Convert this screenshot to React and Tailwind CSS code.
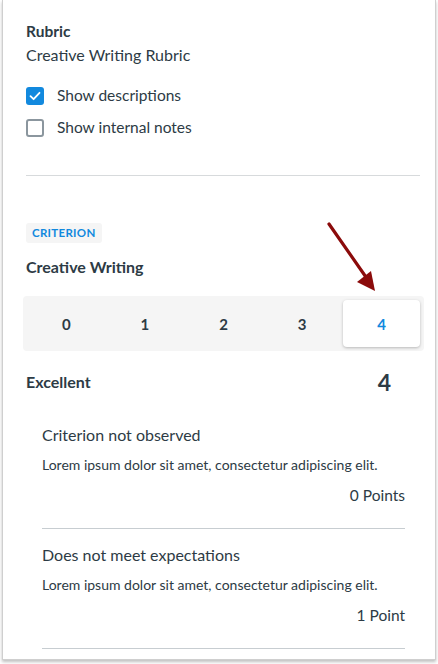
import React, { useState } from "react";

const ratings = [
  {
    title: "Criterion not observed",
    desc: "Lorem ipsum dolor sit amet, consectetur adipiscing elit.",
    points: "0 Points",
  },
  {
    title: "Does not meet expectations",
    desc: "Lorem ipsum dolor sit amet, consectetur adipiscing elit.",
    points: "1 Point",
  },
];

function Checkbox({ checked, label, onChange }) {
  return (
    <label className="flex items-center h-[20px] cursor-pointer">
      {checked ? (
        <span className="w-[18px] h-[18px] rounded-[3px] bg-[#1289de] flex items-center justify-center">
          <svg width="12" height="10" viewBox="0 0 12 10" fill="none">
            <path
              d="M1.5 5.2 L4.6 8.2 L10.5 1.8"
              stroke="white"
              strokeWidth="1.8"
              strokeLinecap="round"
              strokeLinejoin="round"
            />
          </svg>
        </span>
      ) : (
        <span className="w-[18px] h-[18px] rounded-[3px] border-2 border-[#8b969e] bg-white" />
      )}
      <input type="checkbox" className="hidden" checked={checked} onChange={onChange} />
      <span className="ml-[13px] text-[15.5px] text-[#2d3b45]">{label}</span>
    </label>
  );
}

export default function App() {
  const [showDesc, setShowDesc] = useState(true);
  const [showNotes, setShowNotes] = useState(false);
  const [score, setScore] = useState(4);

  return (
    <div
      className="w-[438px] h-[664px] bg-white overflow-hidden"
      style={{ fontFamily: "Lato, 'Open Sans', sans-serif" }}
    >
      <div className="ml-[2px] w-[434px] h-[660px] border-l border-r border-b border-[#cfcfcf] shadow-[0_2px_3px_rgba(0,0,0,0.25)] pl-[23px] pr-[14px] pt-[21px] text-[#2d3b45] relative">
        <div className="text-[15.5px] font-bold leading-[20px]">Rubric</div>
        <div className="text-[16px] leading-[20px] mt-[4px]">Creative Writing Rubric</div>

        <div className="mt-[21px] flex flex-col gap-[12px]">
          <Checkbox checked={showDesc} label="Show descriptions" onChange={() => setShowDesc(!showDesc)} />
          <Checkbox checked={showNotes} label="Show internal notes" onChange={() => setShowNotes(!showNotes)} />
        </div>

        <div className="mt-[37px] h-px bg-[#d7dadc] mr-[1px]" />

        <div className="mt-[47px] inline-flex items-center h-[20px] px-[6px] rounded-[3px] bg-[#f5f5f5] text-[11.5px] font-bold tracking-[0.3px] text-[#1289de]">
          CRITERION
        </div>
        <div className="mt-[14px] text-[16px] font-bold leading-[20px]">Creative Writing</div>

        <div className="mt-[19px] -ml-[3px] w-[401px] h-[55px] rounded-[4px] bg-[#f5f5f5] grid grid-cols-5 p-[4px]">
          {[0, 1, 2, 3, 4].map((n) => (
            <button
              key={n}
              onClick={() => setScore(n)}
              className={
                n === score
                  ? "ml-[2px] rounded-[4px] bg-white shadow-[0_1px_3px_rgba(0,0,0,0.25)] text-[15px] font-bold text-[#1289de]"
                  : "text-[15px] font-bold text-[#2d3b45]"
              }
            >
              {n}
            </button>
          ))}
        </div>

        <div className="mt-[21px] flex items-center justify-between pr-[30px] h-[20px]">
          <span className="text-[16px] font-bold">Excellent</span>
          <span className="text-[23px] font-bold">{score}</span>
        </div>

        <div className="ml-[16px] mr-[16px] mt-[33px]">
          {ratings.map((r) => (
            <div key={r.title} className="border-b border-[#c7cdd1] pt-[16px] pb-[24px] first:pt-0">
              <div className="text-[16px] leading-[20px]">{r.title}</div>
              <div className="mt-[11px] text-[14px] leading-[18px]">{r.desc}</div>
              <div className="mt-[12px] text-right text-[15.5px] leading-[18px]">{r.points}</div>
            </div>
          ))}
        </div>

        <svg
          className="absolute left-[318px] top-[218px]"
          width="60"
          height="80"
          viewBox="0 0 60 80"
        >
          <line x1="8" y1="6" x2="47" y2="62" stroke="#8b0b0b" strokeWidth="3.2" strokeLinecap="round" />
          <polygon points="54,73 36,64 50,53" fill="#8b0b0b" />
        </svg>
      </div>
    </div>
  );
}
